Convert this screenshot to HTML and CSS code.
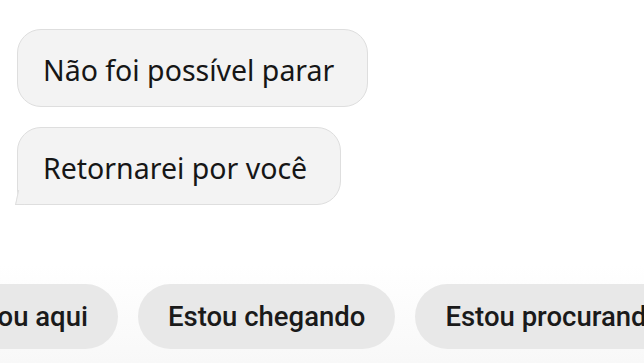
FILE: index.html
```html
<!DOCTYPE html>
<html lang="pt-BR">
<head>
    <meta charset="UTF-8">
    <meta name="viewport" content="width=device-width, initial-scale=1.0">
    <title>Mensagens</title>
    <link rel="stylesheet" href="styles.css">
</head>
<body>
    <div class="messages">
        <div class="bubble">Não foi possível parar</div>
        <div class="bubble tail">Retornarei por você</div>
    </div>

    <div class="quick-replies">
        <div class="chips">
            <span class="chip">Estou aqui</span>
            <span class="chip">Estou chegando</span>
            <span class="chip">Estou procurando</span>
        </div>
    </div>
</body>
</html>
```

FILE: styles.css
```css
body {
    font-family: Roboto, "Liberation Sans", sans-serif;
    margin: 0;
    background-color: #ffffff;
    color: #161616;
    width: 644px;
    height: 363px;
    overflow: hidden;
    display: flex;
    flex-direction: column;
}

.messages {
    display: flex;
    flex-direction: column;
    align-items: flex-start;
    gap: 20px;
    padding: 29px 0 0 17px;
}

.bubble {
    position: relative;
    height: 78px;
    box-sizing: border-box;
    display: flex;
    align-items: center;
    padding: 3px 33px 0 25px;
    font-family: "Noto Sans", sans-serif;
    font-size: 28.5px;
    background-color: #f3f3f3;
    border: 1px solid #dedede;
    border-radius: 24px;
}

.bubble.tail {
    border-bottom-left-radius: 4px;
}
.bubble.tail::before {
    content: "";
    position: absolute;
    left: -3px;
    bottom: -1px;
    width: 8px;
    height: 14px;
    background-color: #f3f3f3;
    border-left: 1px solid #dedede;
    border-bottom: 1px solid #dedede;
    transform: skewX(-12deg);
    transform-origin: bottom left;
}

.quick-replies {
    margin-top: auto;
    padding: 20px 0 14px;
    overflow: hidden;
    background: linear-gradient(#ffffff, #f8f8f8);
}

.chips {
    display: flex;
    gap: 20px;
    margin-left: -71px;
    white-space: nowrap;
}

.chip {
    flex-shrink: 0;
    height: 65px;
    display: flex;
    align-items: center;
    padding: 0 30px;
    border-radius: 33px;
    background-color: #e8e8e8;
    font-size: 27.5px;
    font-weight: 500;
    color: #1a1a1a;
}
```
